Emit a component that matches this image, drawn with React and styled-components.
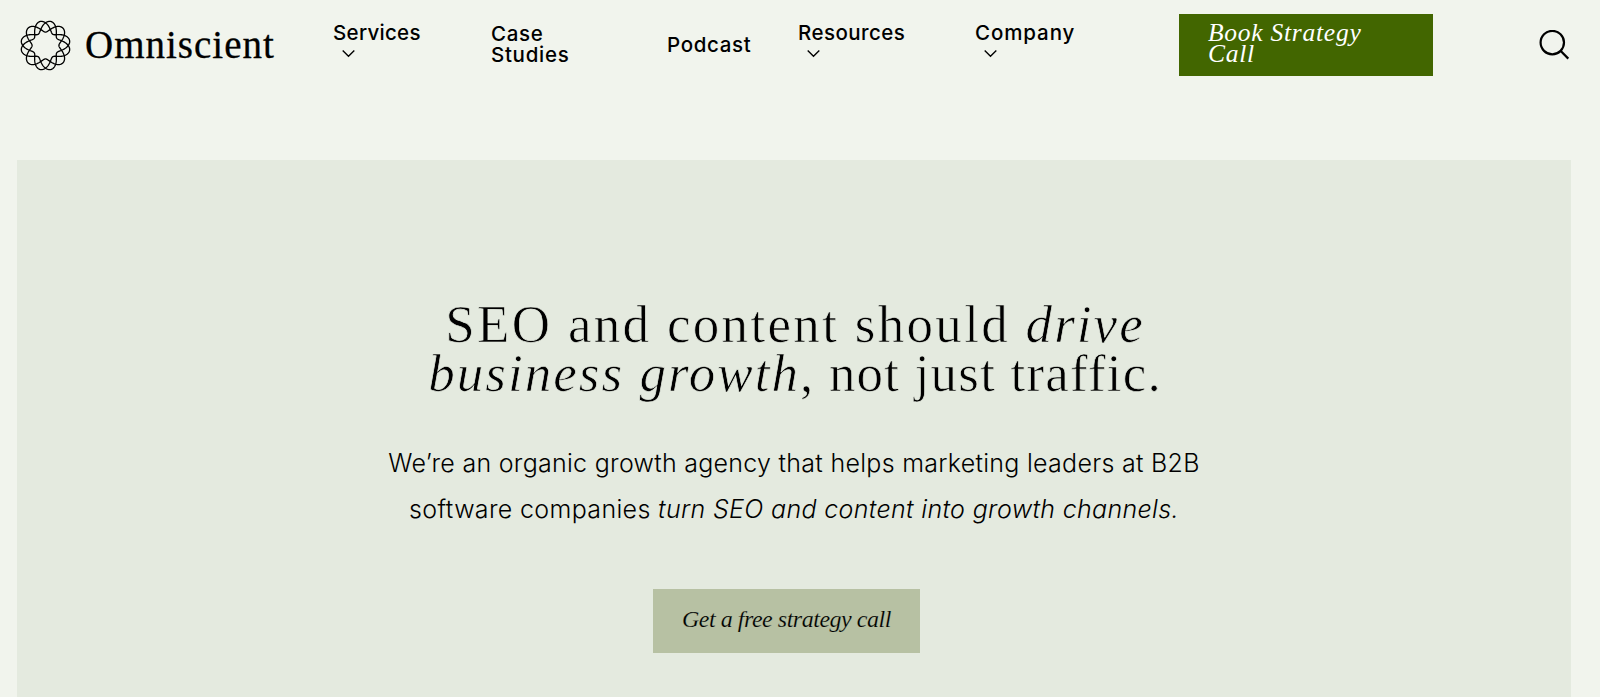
import React from "react";
import styled, { createGlobalStyle } from "styled-components";

const sans = `Inter, "Open Sans", sans-serif`;
const serif = `"Liberation Serif", serif`;

const GlobalStyle = createGlobalStyle`
  * {
    box-sizing: border-box;
  }

  body {
    background: #f1f4ed;
    color: #000;
    margin: 0;
    overflow: hidden;
  }

  a {
    color: inherit;
    text-decoration: none;
  }
`;

const Header = styled.header`
  display: flex;
  height: 159.5px;
  padding-left: 20px;
`;

const Brand = styled.a`
  display: flex;
  width: 313px;
  padding-top: 20px;
`;

const Wordmark = styled.span`
  margin: 3px 0 0 14px;
  font: 39px/44px ${serif};
  letter-spacing: 1px;
  -webkit-text-stroke: 0.3px #000;
`;

const Nav = styled.nav`
  display: grid;
  grid-template-columns: 158px 176px 131px 177px 204px;
  padding-top: 22px;
`;

const NavItem = styled.a`
  width: min-content;
  padding-top: ${p => p.$top || 0}px;
  font: 500 20.5px/21px ${sans};
  letter-spacing: ${p => p.$track || 0}px;
`;

const Chevron = styled.svg`
  display: block;
  margin: 7px 0 0 9px;
`;

const BookButton = styled.a`
  width: 254px;
  height: 61.5px;
  margin-top: 14px;
  padding: 8px 90px 0 29px;
  background: #426600;
  color: #fff;
  font: italic 25.5px/21px ${serif};
  letter-spacing: 0.75px;
  white-space: nowrap;
`;

const SearchButton = styled.button`
  height: 30px;
  margin: 30px 0 0 106px;
  padding: 0;
  border: 0;
  background: none;
`;

const Hero = styled.main`
  display: flex;
  flex-direction: column;
  align-items: center;
  height: 538px;
  margin: 0 29px 0 17px;
  padding-top: 140.5px;
  background: #e4eadf;
  white-space: nowrap;
`;

const Title = styled.h1`
  margin: 0 0 0 2px;
  font: 400 53px/49px ${serif};
  text-align: center;
  /* shaves the stems down to a light weight */
  -webkit-text-stroke: 0.7px #e4eadf;

  em {
    letter-spacing: 2.05px;
  }
`;

const Lead = styled.p`
  margin: 42px 0 0;
  font: 300 25px/46px ${sans};
  text-align: center;
`;

const Line = styled.span`
  display: block;
  letter-spacing: ${p => p.$track}px;
`;

const CallButton = styled.a`
  width: 267px;
  height: 64px;
  margin: 57px 15px 0 0;
  padding: 16px 0 0 29px;
  background: #b7c1a3;
  font: italic 24px/29px ${serif};
  letter-spacing: -0.48px;
  -webkit-text-stroke: 0.2px #b7c1a3;
`;

// a four-lobed strand of the ring, with one lobe turned to the given angle
const strand = angle => {
  const points = [];
  for (let i = 0; i <= 180; i++) {
    const t = (i / 180) * Math.PI * 2;
    const r = 19 + 5.6 * Math.cos(4 * (t - (angle * Math.PI) / 180));
    points.push(
      `${(25.5 + r * Math.cos(t)).toFixed(2)} ${(25.5 + r * Math.sin(t)).toFixed(2)}`
    );
  }
  return `M${points.join("L")}Z`;
};

const LogoMark = () => (
  <svg width="51" height="51" fill="none" stroke="#000" strokeWidth="1.3">
    {[12, 45, 78].map(angle => (
      <path key={angle} d={strand(angle)} />
    ))}
  </svg>
);

const Arrow = () => (
  <Chevron width="13" height="8" fill="none" stroke="#000" strokeWidth="1.4">
    <path d="M.7 .6L6.5 6.2L12.3 .6" />
  </Chevron>
);

const App = () => (
  <>
    <GlobalStyle />
    <Header>
      <Brand href="#">
        <LogoMark />
        <Wordmark>Omniscient</Wordmark>
      </Brand>
      <Nav>
        <NavItem href="#" $track={0.3}>
          Services
          <Arrow />
        </NavItem>
        <NavItem href="#" $top={1} $track={0.7}>
          Case Studies
        </NavItem>
        <NavItem href="#" $top={12} $track={0.65}>
          Podcast
        </NavItem>
        <NavItem href="#" $track={0.45}>
          Resources
          <Arrow />
        </NavItem>
        <NavItem href="#" $track={0.9}>
          Company
          <Arrow />
        </NavItem>
      </Nav>
      <BookButton href="#">
        Book Strategy
        <br />
        Call
      </BookButton>
      <SearchButton aria-label="Search">
        <svg width="31" height="30" fill="none" stroke="#000" strokeWidth="2.2">
          <circle cx="13.3" cy="12.6" r="11.7" />
          <path d="M21.5 20.8L29.3 28.6" />
        </svg>
      </SearchButton>
    </Header>
    <Hero>
      <Title>
        <Line $track={2.32}>
          SEO and content should <em>drive</em>
        </Line>
        <Line $track={1.2}>
          <em>business growth</em>, not just traffic.
        </Line>
      </Title>
      <Lead>
        <Line $track={0.28}>
          We’re an organic growth agency that helps marketing leaders at B2B
        </Line>
        <Line $track={0.34}>
          software companies <em>turn SEO and content into growth channels.</em>
        </Line>
      </Lead>
      <CallButton href="#">Get a free strategy call</CallButton>
    </Hero>
  </>
);

export default App;
